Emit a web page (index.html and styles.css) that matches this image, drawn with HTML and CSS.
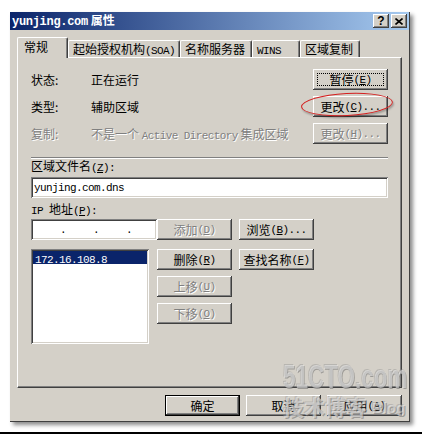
FILE: index.html
```html
<!DOCTYPE html>
<html lang="zh-CN">
<head>
<meta charset="utf-8">
<title>yunjing.com 属性</title>
<link rel="stylesheet" href="styles.css">
</head>
<body>
<div class="dlg">
  <div class="title">
    <span class="ttext"><span class="tm">yunjing.com</span> 属性</span>
    <div class="tbtns">
      <div class="tbtn"><span class="q">?</span></div>
      <div class="tbtn">
        <svg width="8" height="7" viewBox="0 0 8 7"><path d="M0.5 0.5 L7.5 6.5 M7.5 0.5 L0.5 6.5" stroke="#000" stroke-width="1.6" fill="none"/></svg>
      </div>
    </div>
  </div>
  <div class="client">
    <div class="tabs">
      <div class="tab sel w1">常规</div>
      <div class="tab w2">起始授权机构<span class="m">(SOA)</span></div>
      <div class="tab w3">名称服务器</div>
      <div class="tab w4"><span class="m">WINS</span></div>
      <div class="tab w5">区域复制</div>
    </div>
    <div class="panel">
      <div class="rows">
        <div class="row">
          <span class="lbl">状态:</span><span class="val">正在运行</span>
          <div class="btn focus">暂停<span class="m">(<u>E</u>)</span></div>
        </div>
        <div class="row">
          <span class="lbl">类型:</span><span class="val">辅助区域</span>
          <div class="btn">更改<span class="m">(<u>C</u>)...</span></div>
        </div>
        <div class="row dis">
          <span class="lbl">复制:</span><span class="val">不是一个 <span class="m">Active Directory</span> 集成区域</span>
          <div class="btn">更改<span class="m">(<u>H</u>)...</span></div>
        </div>
      </div>
      <div class="sep"></div>
      <div class="flabel">区域文件名<span class="m">(<u>Z</u>):</span></div>
      <div class="edit"><span class="m">yunjing.com.dns</span></div>
      <div class="flabel ip"><span class="m">IP&nbsp;</span>地址<span class="m">(<u>P</u>):</span></div>
      <div class="iprow">
        <div class="edit ipf"><span class="m">.</span><span class="m">.</span><span class="m">.</span></div>
        <div class="btn dis">添加<span class="m">(<u>D</u>)</span></div>
        <div class="btn">浏览<span class="m">(<u>B</u>)...</span></div>
      </div>
      <div class="listrow">
        <div class="list">
          <div class="item"><span class="m">172.16.108.8</span></div>
        </div>
        <div class="bcol">
          <div class="btn">删除<span class="m">(<u>R</u>)</span></div>
          <div class="btn dis">上移<span class="m">(<u>U</u>)</span></div>
          <div class="btn dis">下移<span class="m">(<u>O</u>)</span></div>
        </div>
        <div class="btn">查找名称<span class="m">(<u>F</u>)</span></div>
      </div>
    </div>
    <div class="actions">
      <div class="btn def">确定</div>
      <div class="btn">取消</div>
      <div class="btn">应用<span class="m">(<u>A</u>)</span></div>
    </div>
  </div>
  <div class="ring"></div>
  <div class="wm wm1">51CTO.com</div>
  <div class="wm wm2">技术博客</div>
  <div class="wm wm3">Blog</div>
</div>
<div class="floor"></div>
</body>
</html>
```
FILE: styles.css
```css
html, body {
  margin: 0;
  padding: 0;
  background: #fff;
}
body {
  width: 422px;
  height: 434px;
  overflow: hidden;
  padding: 12px 0 0 10px;
  box-sizing: border-box;
  font-family: "Noto Sans CJK SC", "Liberation Sans", sans-serif;
  font-size: 12px;
  color: #000;
}
.m {
  font-family: "Liberation Mono", "Noto Sans CJK SC", monospace;
  font-size: 11px;
  letter-spacing: -0.6px;
}
u { text-decoration: underline; text-underline-offset: 1px; }

.dlg {
  position: relative;
  width: 400px;
  height: 410px;
  box-sizing: border-box;
  background: #d4d0c8;
  border-right: 1px solid #404040;
  border-bottom: 1px solid #404040;
  box-shadow: 3px 3px 4px rgba(0,0,0,0.45);
  display: flex;
  flex-direction: column;
}
.title {
  height: 18px;
  flex: none;
  background: linear-gradient(to right, #0a246a, #a6caf0);
  display: flex;
  align-items: center;
  padding: 0 2px 0 2px;
  color: #fff;
  font-weight: bold;
}
.ttext { line-height: 18px; }
.tm {
  font-family: "Liberation Mono", monospace;
  font-weight: bold;
  font-size: 12px;
  letter-spacing: -0.3px;
}
.tbtns {
  margin-left: auto;
  display: flex;
  gap: 2px;
}
.tbtn {
  width: 16px;
  height: 14px;
  box-sizing: border-box;
  background: #d4d0c8;
  box-shadow: inset -1px -1px #404040, inset 1px 1px #fff, inset -2px -2px #808080;
  display: flex;
  align-items: center;
  justify-content: center;
}
.q {
  font-family: "Liberation Sans", sans-serif;
  font-weight: bold;
  font-size: 12px;
  color: #000;
  line-height: 12px;
}

.client {
  flex: 1;
  padding: 7px 7px 0 7px;
  display: flex;
  flex-direction: column;
}
.tabs {
  display: flex;
  align-items: flex-end;
  height: 20px;
  position: relative;
  z-index: 1;
}
.tab {
  height: 17px;
  box-sizing: border-box;
  border-top: 1px solid #fff;
  border-left: 1px solid #fff;
  border-right: 1px solid #404040;
  box-shadow: inset -1px 0 #808080;
  border-radius: 2px 2px 0 0;
  padding-left: 4px;
  line-height: 15px;
  white-space: nowrap;
  background: #d4d0c8;
}
.tab.sel {
  height: 21px;
  margin-bottom: -1px;
  padding-left: 6px;
  line-height: 18px;
}
.w1 { width: 51px; }
.w2 { width: 112px; }
.w3 { width: 72px; }
.w4 { width: 48px; }
.w5 { width: 60px; }

.panel {
  height: 331px;
  box-sizing: border-box;
  border-top: 1px solid #fff;
  border-left: 1px solid #fff;
  border-right: 1px solid #404040;
  border-bottom: 1px solid #404040;
  box-shadow: inset -1px -1px #808080;
  padding: 11px 13px 0 13px;
}
.rows {
  display: flex;
  flex-direction: column;
  gap: 6px;
}
.row {
  display: flex;
  align-items: center;
  height: 21px;
}
.lbl { width: 60px; flex: none; }
.val { flex: 1; white-space: nowrap; }
.dis .lbl, .dis .val, .btn.dis, .dis .btn {
  color: #808080;
  text-shadow: 1px 1px 0 #fff;
}

.btn {
  position: relative;
  width: 75px;
  height: 21px;
  flex: none;
  box-sizing: border-box;
  background: #d4d0c8;
  box-shadow: inset -1px -1px #404040, inset 1px 1px #fff, inset -2px -2px #808080;
  display: flex;
  align-items: center;
  justify-content: center;
  white-space: nowrap;
  line-height: 14px;
}
.btn.focus::after {
  content: "";
  position: absolute;
  left: 4px; top: 4px; right: 4px; bottom: 4px;
  border: 1px dotted #000;
}
.btn.def {
  border: 1px solid #000;
}

.sep {
  margin-top: 13px;
  height: 0;
  border-top: 1px solid #808080;
  border-bottom: 1px solid #fff;
}
.flabel {
  height: 14px;
  line-height: 14px;
  white-space: nowrap;
}
.flabel.ip { margin-top: 4px; }
.edit {
  margin-top: 4px;
  height: 21px;
  box-sizing: border-box;
  background: #fff;
  box-shadow: inset 1px 1px #808080, inset -1px -1px #fff, inset 2px 2px #404040, inset -2px -2px #d4d0c8;
  padding-left: 3px;
  display: flex;
  align-items: center;
}
.iprow {
  margin-top: 3px;
  display: flex;
  align-items: center;
}
.ipf {
  margin-top: 0;
  width: 126px;
  flex: none;
  padding-left: 29px;
  gap: 27px;
}
.iprow .btn + .btn { margin-left: 7px; }

.listrow {
  margin-top: 9px;
  display: flex;
  align-items: flex-start;
}
.list {
  width: 118px;
  height: 95px;
  margin-right: 8px;
  box-sizing: border-box;
  background: #fff;
  box-shadow: inset 1px 1px #808080, inset -1px -1px #fff, inset 2px 2px #404040, inset -2px -2px #d4d0c8;
  padding: 2px;
}
.item {
  height: 13px;
  line-height: 13px;
  background: #0a246a;
  color: #fff;
  padding-left: 2px;
}
.bcol {
  display: flex;
  flex-direction: column;
  gap: 6px;
  margin-right: 7px;
}

.actions {
  margin-top: 7px;
  display: flex;
  justify-content: flex-end;
  gap: 6px;
}

.ring {
  position: absolute;
  left: 291px;
  top: 81px;
  width: 90px;
  height: 21px;
  border: 1px solid #d42020;
  border-radius: 50%;
  transform: rotate(-3deg);
  box-shadow: 1px 2px 2px rgba(0,0,0,0.25);
}
.wm {
  position: absolute;
  white-space: nowrap;
  color: rgba(240,240,240,0.55);
  text-shadow: 1px 1px 0 rgba(100,100,100,0.5), -1px -1px 0 rgba(140,140,140,0.4);
  pointer-events: none;
}
.wm1 {
  left: 273px;
  top: 347px;
  font-family: "Liberation Sans", sans-serif;
  font-weight: bold;
  font-size: 34px;
  line-height: 34px;
  transform: scaleX(0.66);
  transform-origin: left top;
}
.wm2 {
  left: 273px;
  top: 381px;
  font-size: 21px;
  line-height: 26px;
  font-weight: bold;
}
.wm3 {
  left: 362px;
  top: 387px;
  font-family: "Liberation Sans", sans-serif;
  font-size: 15px;
  line-height: 18px;
  font-weight: bold;
}
.floor {
  margin-top: 10px;
  margin-left: -10px;
  width: 422px;
  height: 2px;
  background: #000;
}
```
